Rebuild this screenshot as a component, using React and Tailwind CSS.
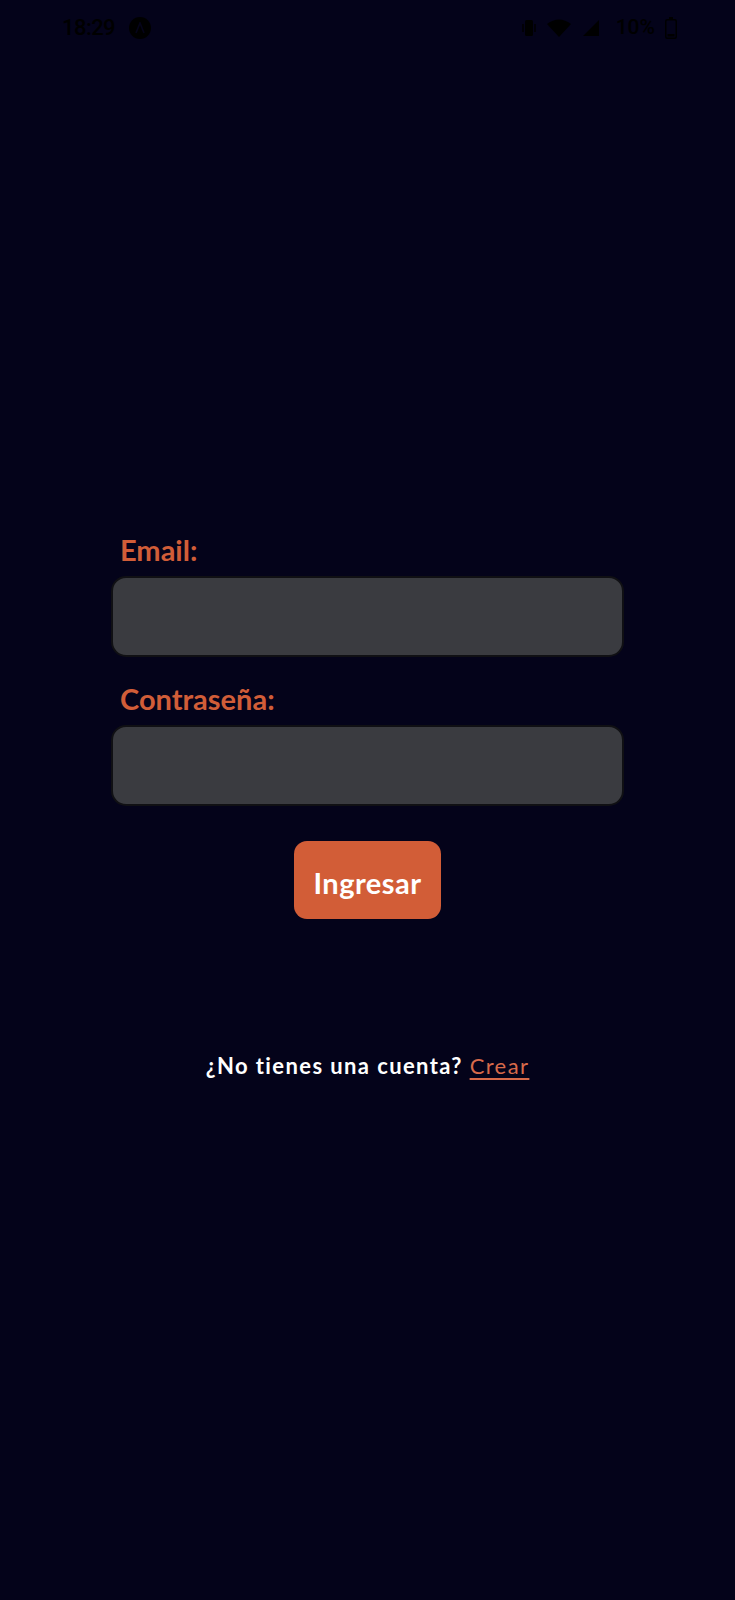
import React from 'react';

const StatusBar = () => (
  <div className="h-[55px] flex items-center justify-between px-[62px] pr-[58px] text-black" style={{ fontFamily: 'Roboto, sans-serif' }}>
    <div className="flex items-center gap-[14px]">
      <span className="text-[22px] leading-none font-medium tracking-tight">18:29</span>
      <span className="w-[22px] h-[22px] rounded-full bg-black flex items-center justify-center">
        <svg width="12" height="12" viewBox="0 0 12 12">
          <path d="M2 11 L6 1 L10 11" stroke="#05041a" strokeWidth="1.6" fill="none" />
        </svg>
      </span>
    </div>
    <div className="flex items-center gap-[10px]">
      <svg width="14" height="22" viewBox="0 0 14 22">
        <rect x="3" y="3" width="8" height="16" rx="1.5" fill="#000" />
        <path d="M1 7v8M13 7v8" stroke="#000" strokeWidth="1.5" />
      </svg>
      <svg width="26" height="20" viewBox="0 0 26 20">
        <path d="M1 6 Q13 -3 25 6 L13 19 Z" fill="#000" />
      </svg>
      <svg width="18" height="18" viewBox="0 0 18 18">
        <path d="M17 1 L17 17 L1 17 Z" fill="#000" />
      </svg>
      <span className="text-[21px] leading-none font-medium ml-[6px]">10%</span>
      <svg width="12" height="22" viewBox="0 0 12 22">
        <rect x="4" y="0" width="4" height="3" fill="#000" />
        <rect x="0.75" y="2.75" width="10.5" height="18.5" rx="1.5" stroke="#000" strokeWidth="1.5" fill="none" />
        <rect x="2.5" y="17" width="7" height="2.5" fill="#000" />
      </svg>
    </div>
  </div>
);

const Field = ({ label, type }) => (
  <div className="flex flex-col">
    <label className="pl-[9px] text-[29px] leading-[36px] font-bold text-[#d15d38] mb-[8px]">{label}</label>
    <input
      type={type}
      className="h-[81px] w-full rounded-[15px] bg-[#3a3b40] border-2 border-[#101014] outline-none"
    />
  </div>
);

export default function App() {
  return (
    <div className="min-h-[1600px] w-full bg-[#04031a] flex flex-col" style={{ fontFamily: 'Lato, "Noto Sans", sans-serif' }}>
      <StatusBar />
      <div className="mx-auto w-[513px] pt-[477px] flex flex-col">
        <Field label="Email:" type="email" />
        <div className="mt-[24px]">
          <Field label="Contraseña:" type="password" />
        </div>
        <div className="flex justify-center mt-[35px]">
          <button className="w-[147px] h-[78px] rounded-[13px] bg-[#d25d37] text-white text-[29px] leading-none font-bold tracking-[0.5px] pt-[4px]">
            Ingresar
          </button>
        </div>
        <p className="mt-[133px] text-center text-white text-[22px] leading-[28px] font-bold tracking-[1.4px]">
          ¿No tienes una cuenta?{' '}
          <a href="#" className="font-normal text-[#d86a4a] underline underline-offset-4">Crear</a>
        </p>
      </div>
    </div>
  );
}
